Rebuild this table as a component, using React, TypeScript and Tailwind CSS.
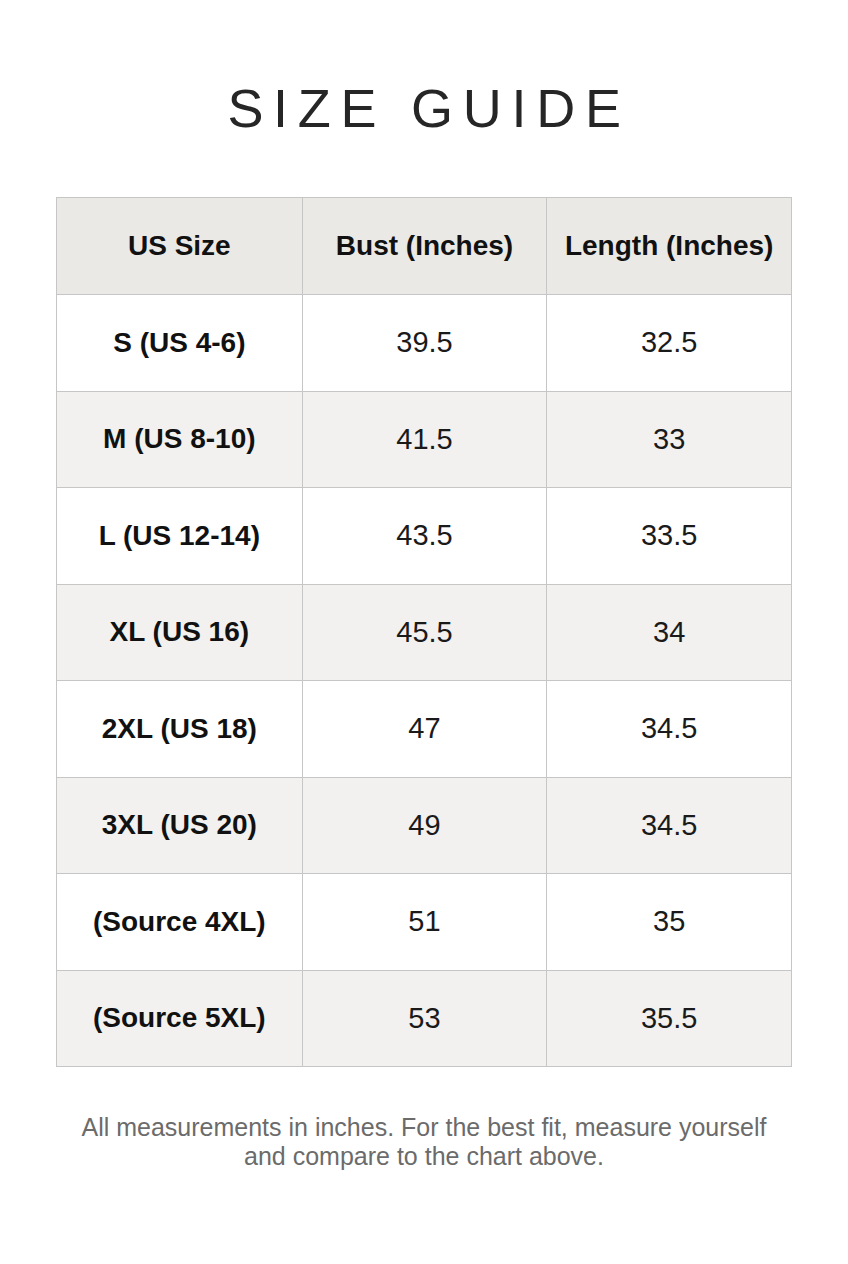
import React from "react";

const rows: [string, string, string][] = [
  ["S (US 4-6)", "39.5", "32.5"],
  ["M (US 8-10)", "41.5", "33"],
  ["L (US 12-14)", "43.5", "33.5"],
  ["XL (US 16)", "45.5", "34"],
  ["2XL (US 18)", "47", "34.5"],
  ["3XL (US 20)", "49", "34.5"],
  ["(Source 4XL)", "51", "35"],
  ["(Source 5XL)", "53", "35.5"],
];

export default function App() {
  return (
    <div
      className="w-[848px] h-[1264px] bg-white flex flex-col items-center"
      style={{ fontFamily: '"Liberation Sans", Arial, sans-serif' }}
    >
      <h1 className="mt-[81px] text-[54px] leading-none font-normal text-[#262626] tracking-[0.18em] pl-[10px]">
        SIZE GUIDE
      </h1>
      <div className="mt-[62px] w-[736px] border border-[#c6c6c6]">
        <div className="grid grid-cols-3 h-[96px] bg-[#ebe9e6]">
          {["US Size", "Bust (Inches)", "Length (Inches)"].map((h, i) => (
            <div
              key={h}
              className={`flex items-center justify-center text-[28px] font-bold text-[#111] ${
                i > 0 ? "border-l border-[#c6c6c6]" : ""
              }`}
            >
              {h}
            </div>
          ))}
        </div>
        {rows.map((r, idx) => (
          <div
            key={r[0]}
            className={`grid grid-cols-3 h-[96.5px] border-t border-[#c6c6c6] ${
              idx % 2 === 0 ? "bg-white" : "bg-[#f2f1ef]"
            }`}
          >
            <div className="flex items-center justify-center text-[28px] font-bold text-[#111]">
              {r[0]}
            </div>
            <div className="flex items-center justify-center text-[29px] text-[#1a1a1a] border-l border-[#c6c6c6]">
              {r[1]}
            </div>
            <div className="flex items-center justify-center text-[29px] text-[#1a1a1a] border-l border-[#c6c6c6]">
              {r[2]}
            </div>
          </div>
        ))}
      </div>
      <p className="mt-[46px] w-[760px] text-center text-[25px] leading-[29px] text-[#6b6b6b]">
        All measurements in inches. For the best fit, measure yourself
        <br />
        and compare to the chart above.
      </p>
    </div>
  );
}
